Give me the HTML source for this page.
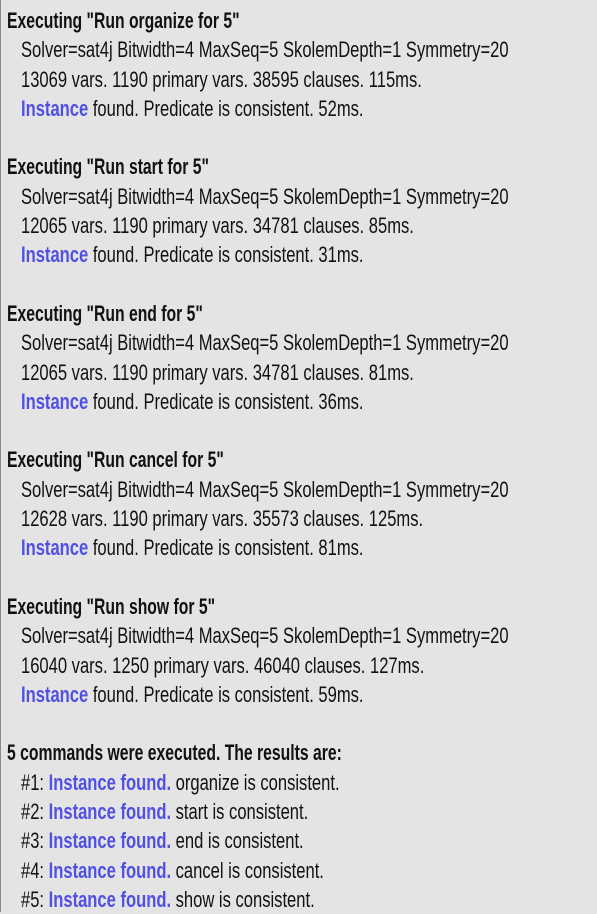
<!DOCTYPE html>
<html><head><style>
html,body{margin:0;padding:0;}
body{width:597px;height:912px;overflow:hidden;background:#e4e4e4;border-left:1px solid #8a8a8a;box-sizing:border-box;}
.w{padding-top:6px;font-family:"Liberation Sans",sans-serif;font-size:22px;line-height:29.3px;color:#111;}
.l,.h{white-space:nowrap;height:29.3px;transform:scaleX(0.753);transform-origin:0 0;}
.l{margin-left:20px}
.h{margin-left:6px;font-weight:bold;transform:scaleX(0.715);}
.b{height:29.3px}
.i{color:#5050e8;font-weight:bold}
</style></head><body><div class="w">
<div class="h">Executing "Run organize for 5"</div>
<div class="l">Solver=sat4j Bitwidth=4 MaxSeq=5 SkolemDepth=1 Symmetry=20</div>
<div class="l">13069 vars. 1190 primary vars. 38595 clauses. 115ms.</div>
<div class="l"><span class="i">Instance</span> found. Predicate is consistent. 52ms.</div>
<div class="b"></div>
<div class="h">Executing "Run start for 5"</div>
<div class="l">Solver=sat4j Bitwidth=4 MaxSeq=5 SkolemDepth=1 Symmetry=20</div>
<div class="l">12065 vars. 1190 primary vars. 34781 clauses. 85ms.</div>
<div class="l"><span class="i">Instance</span> found. Predicate is consistent. 31ms.</div>
<div class="b"></div>
<div class="h">Executing "Run end for 5"</div>
<div class="l">Solver=sat4j Bitwidth=4 MaxSeq=5 SkolemDepth=1 Symmetry=20</div>
<div class="l">12065 vars. 1190 primary vars. 34781 clauses. 81ms.</div>
<div class="l"><span class="i">Instance</span> found. Predicate is consistent. 36ms.</div>
<div class="b"></div>
<div class="h">Executing "Run cancel for 5"</div>
<div class="l">Solver=sat4j Bitwidth=4 MaxSeq=5 SkolemDepth=1 Symmetry=20</div>
<div class="l">12628 vars. 1190 primary vars. 35573 clauses. 125ms.</div>
<div class="l"><span class="i">Instance</span> found. Predicate is consistent. 81ms.</div>
<div class="b"></div>
<div class="h">Executing "Run show for 5"</div>
<div class="l">Solver=sat4j Bitwidth=4 MaxSeq=5 SkolemDepth=1 Symmetry=20</div>
<div class="l">16040 vars. 1250 primary vars. 46040 clauses. 127ms.</div>
<div class="l"><span class="i">Instance</span> found. Predicate is consistent. 59ms.</div>
<div class="b"></div>
<div class="h">5 commands were executed. The results are:</div>
<div class="l">#1: <span class="i">Instance found.</span> organize is consistent.</div>
<div class="l">#2: <span class="i">Instance found.</span> start is consistent.</div>
<div class="l">#3: <span class="i">Instance found.</span> end is consistent.</div>
<div class="l">#4: <span class="i">Instance found.</span> cancel is consistent.</div>
<div class="l">#5: <span class="i">Instance found.</span> show is consistent.</div>
</div></body></html>
